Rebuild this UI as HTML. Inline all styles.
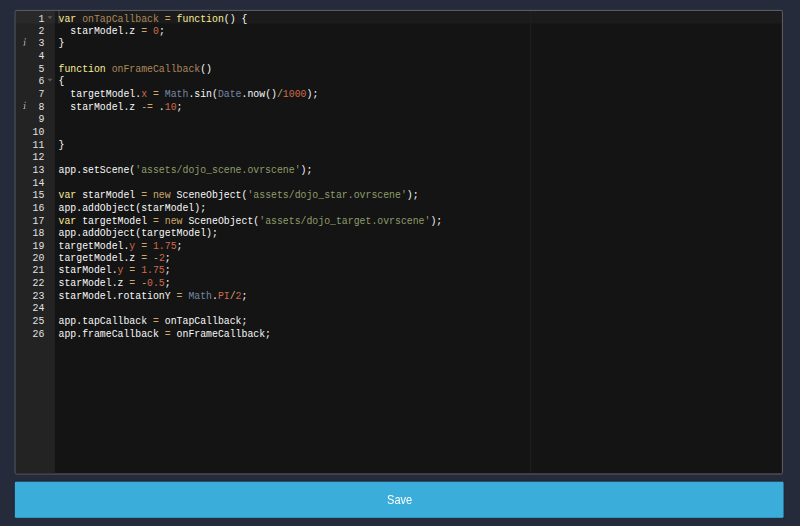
<!DOCTYPE html>
<html><head><meta charset="utf-8"><title>Editor</title>
<style>
html,body{margin:0;padding:0}
body{width:800px;height:526px;overflow:hidden;background:#262b3b;position:relative}
#page{position:absolute;left:0;top:0;width:976px;height:581px;transform:scale(0.81967,0.90534);transform-origin:0 0;font-family:"Liberation Sans",sans-serif}
#ed{position:absolute;left:17.5px;top:10.9px;width:935.3px;height:511px;border:1px solid #6c6d71;border-radius:2px;background:#141414;overflow:hidden;
 font-family:"Liberation Mono",monospace;font-size:12px;line-height:14px;color:#F8F8F8}
#gut{position:absolute;left:0;top:0;width:48.9px;height:100%;background:#232323}
#act{position:absolute;left:0;top:0;width:100%;height:14px;background:rgba(255,255,255,0.031)}
#gact{position:absolute;left:0;top:0;width:48.9px;height:14px;background:rgba(255,255,255,0.031)}
#cur{position:absolute;left:52.9px;top:0;width:2px;height:14px;background:rgba(167,167,167,0.22)}
#pm{position:absolute;left:628.5px;top:0;width:1px;height:100%;background:#232323}
.gl{position:absolute;left:0;width:35.6px;text-align:right;white-space:pre;height:14px;color:#E2E2E2}
.cl{position:absolute;left:52.9px;white-space:pre;height:14px}
.fold{position:absolute;left:39.3px;width:0;height:0;border-left:3.2px solid transparent;border-right:3.2px solid transparent;border-top:3px solid #5c5c5c}
.info{position:absolute;left:9.2px;width:4.2px;height:8.6px;transform:skewX(-8deg)}
#btn{position:absolute;left:16.6px;top:531.4px;width:938.5px;height:39.9px;border:1px solid #1f2434;border-radius:2.5px;background:#3aaddb;color:#fff;
 font-size:13.5px;line-height:39.9px;text-align:center;box-sizing:content-box;text-indent:1.4px}
#btn span{position:relative;top:1px}
</style></head>
<body>
<div id="page">
<div id="ed">
 <div id="act"></div>
 <div id="pm"></div>
 <div id="gut"></div>
 <div id="gact"></div>
 <div id="cur"></div>
<div class="gl" style="top:1.70px">1</div>
<div class="gl" style="top:15.64px">2</div>
<div class="gl" style="top:29.58px">3</div>
<div class="gl" style="top:43.52px">4</div>
<div class="gl" style="top:57.46px">5</div>
<div class="gl" style="top:71.40px">6</div>
<div class="gl" style="top:85.34px">7</div>
<div class="gl" style="top:99.28px">8</div>
<div class="gl" style="top:113.22px">9</div>
<div class="gl" style="top:127.16px">10</div>
<div class="gl" style="top:141.10px">11</div>
<div class="gl" style="top:155.04px">12</div>
<div class="gl" style="top:168.98px">13</div>
<div class="gl" style="top:182.92px">14</div>
<div class="gl" style="top:196.86px">15</div>
<div class="gl" style="top:210.80px">16</div>
<div class="gl" style="top:224.74px">17</div>
<div class="gl" style="top:238.68px">18</div>
<div class="gl" style="top:252.62px">19</div>
<div class="gl" style="top:266.56px">20</div>
<div class="gl" style="top:280.50px">21</div>
<div class="gl" style="top:294.44px">22</div>
<div class="gl" style="top:308.38px">23</div>
<div class="gl" style="top:322.32px">24</div>
<div class="gl" style="top:336.26px">25</div>
<div class="gl" style="top:350.20px">26</div>
<div class="cl" style="top:1.70px"><span style="color:#F9EE98">var</span> <span style="color:#AC885B">onTapCallback</span> <span style="color:#CDA869">=</span> <span style="color:#F9EE98">function</span>() {</div>
<div class="cl" style="top:15.64px">  starModel.z <span style="color:#CDA869">=</span> <span style="color:#CF6A4C">0</span>;</div>
<div class="cl" style="top:29.58px">}</div>
<div class="cl" style="top:43.52px"></div>
<div class="cl" style="top:57.46px"><span style="color:#F9EE98">function</span> <span style="color:#AC885B">onFrameCallback</span>()</div>
<div class="cl" style="top:71.40px">{</div>
<div class="cl" style="top:85.34px">  targetModel.<span style="color:#CF6A4C">x</span> <span style="color:#CDA869">=</span> <span style="color:#7587A6">Math</span>.sin(<span style="color:#7587A6">Date</span>.now()<span style="color:#CDA869">/</span><span style="color:#CF6A4C">1000</span>);</div>
<div class="cl" style="top:99.28px">  starModel.z <span style="color:#CDA869">-=</span> .<span style="color:#CF6A4C">10</span>;</div>
<div class="cl" style="top:113.22px"></div>
<div class="cl" style="top:127.16px"></div>
<div class="cl" style="top:141.10px">}</div>
<div class="cl" style="top:155.04px"></div>
<div class="cl" style="top:168.98px">app.setScene(<span style="color:#8F9D6A">'assets/dojo_scene.ovrscene'</span>);</div>
<div class="cl" style="top:182.92px"></div>
<div class="cl" style="top:196.86px"><span style="color:#F9EE98">var</span> starModel <span style="color:#CDA869">=</span> <span style="color:#CDA869">new</span> SceneObject(<span style="color:#8F9D6A">'assets/dojo_star.ovrscene'</span>);</div>
<div class="cl" style="top:210.80px">app.addObject(starModel);</div>
<div class="cl" style="top:224.74px"><span style="color:#F9EE98">var</span> targetModel <span style="color:#CDA869">=</span> <span style="color:#CDA869">new</span> SceneObject(<span style="color:#8F9D6A">'assets/dojo_target.ovrscene'</span>);</div>
<div class="cl" style="top:238.68px">app.addObject(targetModel);</div>
<div class="cl" style="top:252.62px">targetModel.<span style="color:#CF6A4C">y</span> <span style="color:#CDA869">=</span> <span style="color:#CF6A4C">1.75</span>;</div>
<div class="cl" style="top:266.56px">targetModel.z <span style="color:#CDA869">=</span> <span style="color:#CDA869">-</span><span style="color:#CF6A4C">2</span>;</div>
<div class="cl" style="top:280.50px">starModel.<span style="color:#CF6A4C">y</span> <span style="color:#CDA869">=</span> <span style="color:#CF6A4C">1.75</span>;</div>
<div class="cl" style="top:294.44px">starModel.z <span style="color:#CDA869">=</span> <span style="color:#CDA869">-</span><span style="color:#CF6A4C">0.5</span>;</div>
<div class="cl" style="top:308.38px">starModel.rotationY <span style="color:#CDA869">=</span> <span style="color:#7587A6">Math</span>.<span style="color:#CF6A4C">PI</span><span style="color:#CDA869">/</span><span style="color:#CF6A4C">2</span>;</div>
<div class="cl" style="top:322.32px"></div>
<div class="cl" style="top:336.26px">app.tapCallback <span style="color:#CDA869">=</span> onTapCallback;</div>
<div class="cl" style="top:350.20px">app.frameCallback <span style="color:#CDA869">=</span> onFrameCallback;</div>
<i class="fold" style="top:5.90px"></i>
<svg class="info" style="top:30.28px" viewBox="0 0 4 9"><rect x="1.6" y="0.2" width="1.4" height="1.5" fill="#a6a6a6"/><path d="M0.6 3.2h2.3v4.6h0.8v0.9h-3.2v-0.9h1v-3.7h-0.9z" fill="#969696"/></svg>
<i class="fold" style="top:75.60px"></i>
<svg class="info" style="top:99.98px" viewBox="0 0 4 9"><rect x="1.6" y="0.2" width="1.4" height="1.5" fill="#a6a6a6"/><path d="M0.6 3.2h2.3v4.6h0.8v0.9h-3.2v-0.9h1v-3.7h-0.9z" fill="#969696"/></svg>
</div>
<div id="btn"><span>Save</span></div>
</div>
</body></html>
